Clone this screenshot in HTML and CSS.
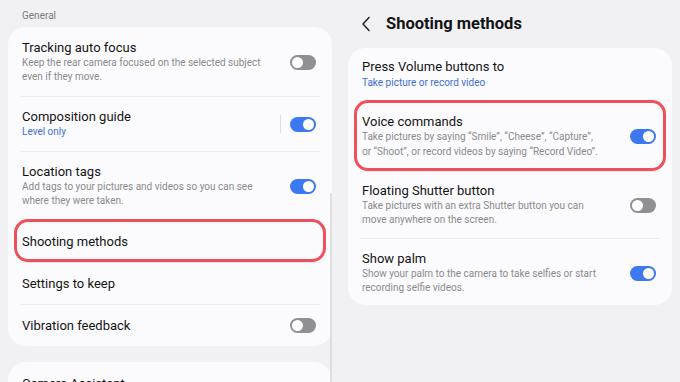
FILE: index.html
```html
<!DOCTYPE html>
<html lang="en">
<head>
    <meta charset="UTF-8">
    <title>Camera settings</title>
    <link rel="stylesheet" href="styles.css">
</head>
<body>
    <div class="screen">
        <!-- Left - Camera settings list -->
        <div class="pane left">
            <div class="group-label">General</div>
            <div class="card">
                <div class="row">
                    <div class="text">
                        <div class="title">Tracking auto focus</div>
                        <div class="desc">Keep the rear camera focused on the selected subject<br>even if they move.</div>
                    </div>
                    <div class="toggle"></div>
                </div>
                <div class="row">
                    <div class="text">
                        <div class="title">Composition guide</div>
                        <div class="value">Level only</div>
                    </div>
                    <div class="vline"></div>
                    <div class="toggle on"></div>
                </div>
                <div class="row">
                    <div class="text">
                        <div class="title">Location tags</div>
                        <div class="desc">Add tags to your pictures and videos so you can see<br>where they were taken.</div>
                    </div>
                    <div class="toggle on"></div>
                </div>
                <div class="row single marked">
                    <div class="text">
                        <div class="title">Shooting methods</div>
                    </div>
                </div>
                <div class="row single">
                    <div class="text">
                        <div class="title">Settings to keep</div>
                    </div>
                </div>
                <div class="row single">
                    <div class="text">
                        <div class="title">Vibration feedback</div>
                    </div>
                    <div class="toggle"></div>
                </div>
            </div>
            <div class="card next">
                <div class="row single">
                    <div class="text">
                        <div class="title">Camera Assistant</div>
                    </div>
                </div>
            </div>
            <div class="scrollbar"></div>
        </div>

        <!-- Right - Shooting methods -->
        <div class="pane right">
            <div class="header">
                <svg class="back" width="10" height="16" viewBox="0 0 10 16">
                    <path d="M8 1.5 L2 8 L8 14.5" fill="none" stroke="#222" stroke-width="1.5" stroke-linecap="round" stroke-linejoin="round"/>
                </svg>
                <h1>Shooting methods</h1>
            </div>
            <div class="card">
                <div class="row first">
                    <div class="text">
                        <div class="title">Press Volume buttons to</div>
                        <div class="value">Take picture or record video</div>
                    </div>
                </div>
                <div class="row marked voice">
                    <div class="text">
                        <div class="title">Voice commands</div>
                        <div class="desc">Take pictures by saying “Smile”, “Cheese”, “Capture”,<br>or “Shoot”, or record videos by saying “Record Video”.</div>
                    </div>
                    <div class="toggle on"></div>
                </div>
                <div class="row floating">
                    <div class="text">
                        <div class="title">Floating Shutter button</div>
                        <div class="desc">Take pictures with an extra Shutter button you can<br>move anywhere on the screen.</div>
                    </div>
                    <div class="toggle"></div>
                </div>
                <div class="row palm">
                    <div class="text">
                        <div class="title">Show palm</div>
                        <div class="desc">Show your palm to the camera to take selfies or start<br>recording selfie videos.</div>
                    </div>
                    <div class="toggle on"></div>
                </div>
            </div>
        </div>
    </div>
</body>
</html>
```

FILE: styles.css
```css
body {
    margin: 0;
    background-color: #f1f1f3;
    font-family: Roboto, "Noto Sans", sans-serif;
    color: #141414;
    overflow: hidden;
}

.screen {
    display: flex;
    width: 680px;
    height: 382px;
    overflow: hidden;
}

.pane {
    position: relative;
    width: 340px;
    padding: 0 8px;
    box-sizing: border-box;
}

.group-label {
    font-size: 10px;
    line-height: 14px;
    color: #7b7b7d;
    padding: 9px 0 4px 14px;
}

.card {
    background-color: #fbfbfd;
    border-radius: 18px;
    overflow: hidden;
}

.card.next {
    margin-top: 16px;
}

.row {
    position: relative;
    display: flex;
    align-items: center;
    padding: 13px 16px 12px 14px;
}

.row + .row::before {
    content: "";
    position: absolute;
    top: 0;
    left: 12px;
    right: 12px;
    height: 1px;
    background-color: #ececee;
}

.row.single {
    padding-top: 13.5px;
    padding-bottom: 12.5px;
}

.text {
    flex: 1;
    min-width: 0;
}

.title {
    font-size: 13px;
    line-height: 16px;
}

.desc {
    font-size: 10px;
    line-height: 14px;
    color: #8a8a8c;
    white-space: nowrap;
}

.value {
    font-size: 10px;
    line-height: 14px;
    color: #3b6fd6;
}

.marked::after {
    content: "";
    position: absolute;
    top: -1px;
    bottom: 0;
    left: 6px;
    right: 6px;
    border: 3px solid #f0505b;
    border-radius: 14px;
}

.vline {
    width: 1px;
    height: 18px;
    background-color: #dcdcde;
    margin-right: 9px;
}

.toggle {
    position: relative;
    width: 26px;
    height: 15px;
    border-radius: 8px;
    background-color: #909094;
    flex-shrink: 0;
}

.toggle::after {
    content: "";
    position: absolute;
    top: 2px;
    left: 2px;
    width: 11px;
    height: 11px;
    border-radius: 50%;
    background-color: #ffffff;
}

.toggle.on {
    background-color: #3c78f0;
}

.toggle.on::after {
    left: 13px;
}

.scrollbar {
    position: absolute;
    right: 8px;
    top: 193px;
    bottom: 0;
    width: 2px;
    background-color: #dedee0;
}

.header {
    display: flex;
    align-items: center;
    height: 47px;
    padding-left: 13px;
    padding-bottom: 1px;
}

.back {
    margin-right: 15px;
}

h1 {
    margin: 0;
    font-size: 16.5px;
    font-weight: 700;
}

.right .row.first {
    padding-top: 11px;
    padding-bottom: 10px;
}

.right .row.first .value {
    line-height: 16px;
}

.right .row.voice {
    padding-top: 13px;
    padding-bottom: 12px;
}

.right .row.voice .desc {
    line-height: 14.5px;
}

.right .row.floating {
    padding-top: 12px;
    padding-bottom: 11px;
}

.right .row.palm {
    padding-top: 13px;
    padding-bottom: 10px;
}
```
